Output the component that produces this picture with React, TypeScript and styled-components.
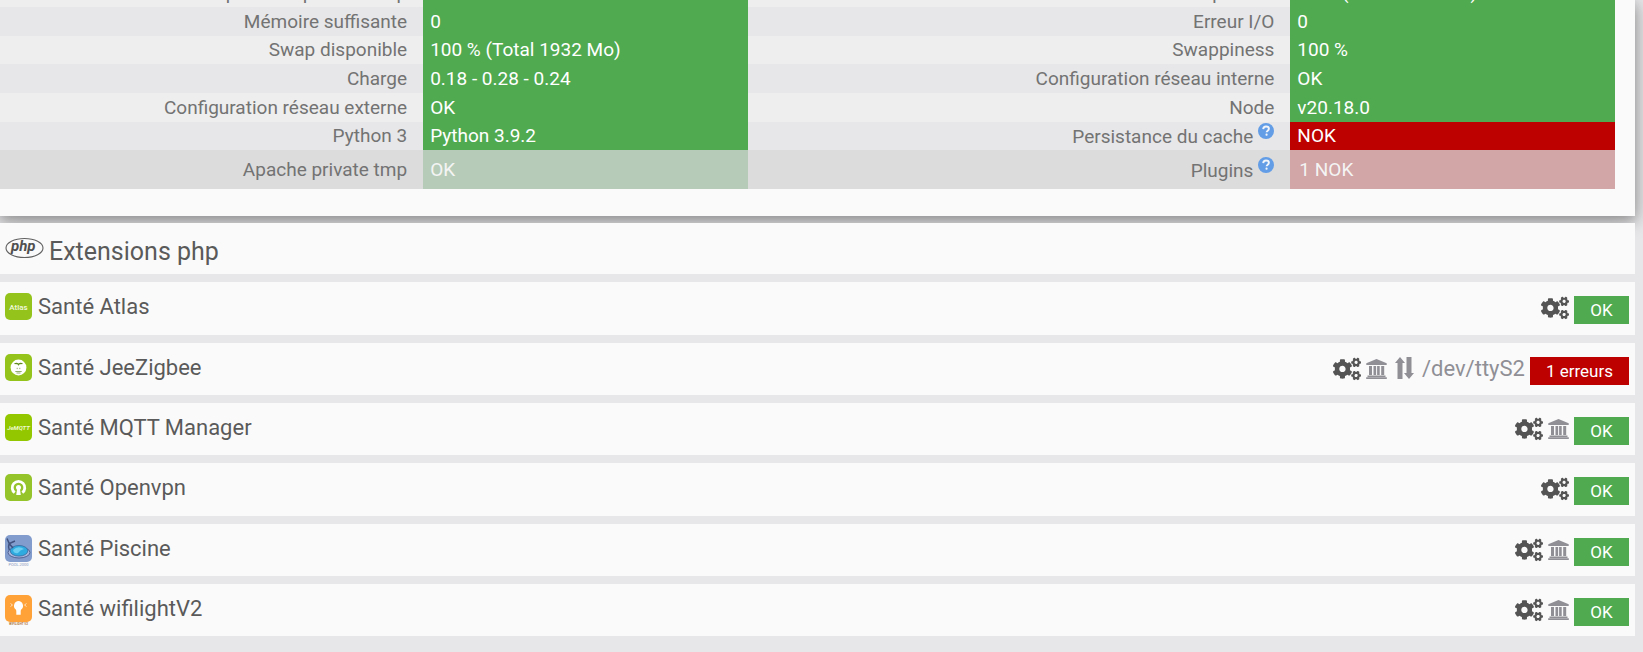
import React from "react";
import styled, { createGlobalStyle } from "styled-components";
import { FaCogs } from "react-icons/fa";

const GlobalStyle = createGlobalStyle`
  * { box-sizing: border-box; }
  body {
    margin: 0;
    background: #e7e7e9;
    color: #5a5a5a;
    font-family: Roboto, "Liberation Sans", sans-serif;
  }
`;

const Page = styled.main`
  padding-right: 8px;
`;

const HealthPanel = styled.section`
  padding: 0 20px 27px 0;
  background: #fafafb;
  box-shadow: 0 5px 11px rgba(0, 0, 0, 0.18), 0 4px 20px rgba(0, 0, 0, 0.3);
`;

const TableViewport = styled.div`
  display: flex;
  flex-direction: column;
  justify-content: flex-end;
  height: 189px;
  overflow: hidden;
`;

const HealthTable = styled.table`
  width: 100%;
  table-layout: fixed;
  border-collapse: collapse;
  font-size: 19px;
  line-height: 24px;
`;

const HealthRow = styled.tr<{ $height: number; $hovered?: boolean }>`
  height: ${(p) => p.$height}px;
  background: ${(p) => (p.$hovered ? "#dcdcdc" : "#e7e7e9")};
  &:nth-child(odd) {
    background: ${(p) => (p.$hovered ? "#dcdcdc" : "#eeeeee")};
  }
`;

const LabelCell = styled.th`
  padding: 0 16px 0 0;
  color: #737373;
  font-weight: 400;
  text-align: right;
  white-space: nowrap;
`;

type Status = "ok" | "nok";

const ValueCell = styled.td<{ $status: Status; $faded?: boolean }>`
  padding: 0 7px;
  color: ${(p) => (p.$faded ? "#f4f4f4" : "#ffffff")};
  background: ${(p) =>
    p.$status === "ok"
      ? p.$faded ? "#b7ccb8" : "#50aa50"
      : p.$faded ? "#d2a5a6" : "#bd0000"};
`;

const PluginCount = styled.span`
  padding-left: 2px;
`;

const HelpButton = styled.button`
  width: 16px;
  height: 16px;
  margin-left: 5px;
  padding: 0;
  border: 0;
  background: none;
  vertical-align: 4px;
  svg { display: block; }
`;

const PanelList = styled.div`
  display: grid;
  grid-auto-rows: 53px 52px 52px;
  row-gap: 8px;
  margin-top: 8px;
`;

const PanelBar = styled.section`
  display: flex;
  justify-content: space-between;
  padding: 11px 6px 0 5px;
  background: #fafafb;
`;

const PhpBar = styled(PanelBar)`
  height: 51px;
  margin-top: 7px;
`;

const PanelTitle = styled.h3<{ $size: number }>`
  margin: 0;
  font-size: ${(p) => p.$size}px;
  font-weight: 400;
  line-height: 28px;
`;

const TitleLink = styled.a`
  display: flex;
  align-items: flex-start;
  gap: 6px;
  color: inherit;
  text-decoration: none;
  svg { flex: none; overflow: visible; }
`;

const PhpTitle = styled(TitleLink)`
  padding-top: 4px;
`;

const Actions = styled.div`
  display: flex;
  align-items: flex-start;
  gap: 5px;
  color: #8f8f95;
`;

const IconButton = styled.button`
  display: flex;
  align-items: center;
  height: 30px;
  padding: 0;
  border: 0;
  background: none;
  color: #545454;
`;

const Marker = styled.span`
  display: flex;
  align-items: center;
  height: 30px;
`;

const PortMarker = styled(Marker)`
  height: 28px;
  padding: 0 3px;
`;

const Port = styled.span`
  font-size: 22px;
  line-height: 30px;
`;

const Badge = styled.span<{ $status: Status }>`
  min-width: 55px;
  margin-top: 3px;
  padding: 0 16px;
  color: #ffffff;
  background: ${(p) => (p.$status === "ok" ? "#50aa50" : "#bd0000")};
  font-size: 17px;
  line-height: 28px;
  text-align: center;
`;

const HelpIcon = () => (
  <svg width="16" height="16" viewBox="0 0 16 16" aria-hidden="true">
    <circle cx="8" cy="8" r="8" fill="#629de6" />
    <path d="M5.200 6.100C5.300 4.300 6.400 3.500 8 3.500c1.700 0 2.900.9 2.900 2.300 0 1.900-2.300 1.900-2.300 3.500" fill="none" stroke="#f2f5fa" strokeWidth="1.900" />
    <rect x="7.500" y="10.600" width="2.100" height="2.100" rx=".8" fill="#f2f5fa" />
  </svg>
);

const MarketIcon = () => (
  <svg width="21" height="20" viewBox="0 0 21 20" fill="currentColor" role="img" aria-label="Market">
    <path d="M10.500 0 20.700 4.200V6H.3V4.200ZM3 7h3v9H3zM7.500 7h2.600v9H7.500zM11.100 7h2.600v9h-2.600zM15.200 7h3v9h-3zM1.500 16.500h18V18h-18zM.2 18.200h20.600V20H.2z" />
  </svg>
);

const PortIcon = () => (
  <svg width="19" height="22" viewBox="0 0 19 22" fill="currentColor" role="img" aria-label="Port">
    <path d="M5 0 10 6H7.500V22H2.500V6H0ZM14 22 9 16H11.500V0h5v16H19Z" />
  </svg>
);

const PhpLogo = () => (
  <svg width="38" height="20" viewBox="0 0 38 20" aria-hidden="true">
    <ellipse cx="19.500" cy="10" rx="18.500" ry="9.500" fill="none" stroke="#606060" strokeWidth="1.100" />
    <text x="6" y="13" fill="#505050" fontFamily="Roboto" fontSize="15" fontStyle="italic" fontWeight="700">php</text>
  </svg>
);

const Tile = ({ color, children }: { color: string; children: React.ReactNode }) => (
  <svg width="27" height="27" viewBox="0 0 27 27" aria-hidden="true">
    <rect width="27" height="27" rx="5" fill={color} />
    {children}
  </svg>
);

const AtlasLogo = () => (
  <Tile color="#94c41c">
    <text x="13.500" y="17" textAnchor="middle" fill="#f0f7df" fontFamily="Roboto" fontSize="8" fontWeight="500">Atlas</text>
  </Tile>
);

const ZigbeeLogo = () => (
  <Tile color="#94c41c">
    <circle cx="13.500" cy="13.500" r="7.900" fill="#fff" />
    <path d="M8.800 10q2.500-2.400 4.700-.5 2.200-1.900 4.700.5l-3.600.3-1.100 1.500-1.100-1.500z" fill="#5d8b1c" />
    <path d="M12.200 13.800v1.300M14.800 13.800v1.300M10.300 17.500h6.400M11.500 19h4" stroke="#86a55b" strokeWidth=".9" />
  </Tile>
);

const MqttLogo = () => (
  <Tile color="#93c800">
    <text x="13.500" y="16" textAnchor="middle" fill="#edf8cf" fontFamily="Roboto" fontSize="6" fontStyle="italic" fontWeight="700">JeMQTT</text>
  </Tile>
);

const OpenvpnLogo = () => (
  <Tile color="#94c32a">
    <path d="M9.700 18.700a6.300 6.300 0 1 1 7.600 0" fill="none" stroke="#fff" strokeWidth="2.800" />
    <circle cx="13.500" cy="13.500" r="2.500" fill="#fff" />
    <path d="M12.300 14h2.500l1 7h-4.600z" fill="#fff" />
  </Tile>
);

const PoolLogo = () => (
  <Tile color="#829dcd">
    <ellipse cx="14" cy="17.500" rx="11" ry="5.500" fill="#a6b4db" stroke="#526293" />
    <ellipse cx="14" cy="15.800" rx="8.800" ry="5.300" fill="#2fabe0" stroke="#356aa0" strokeWidth=".8" />
    <path d="M8 15q5-5 11-1-4 1-6 4-4 1-5-3" fill="#6ccef0" />
    <path d="M2 3.500 4.500 9 8 13M4.500 8.500 10 6M4 9q-1 3 .3 6" fill="none" stroke="#40517f" strokeWidth="1.500" />
    <text x="13.500" y="31" textAnchor="middle" fill="#8797bd" fontFamily="Roboto" fontSize="4">POOL.2000</text>
  </Tile>
);

const WifilightLogo = () => (
  <Tile color="#ffa238">
    <path d="M13.500 6a4.800 4.800 0 0 0-3 8.300q.8.700.8 2v3.500h4.400v-3.500q0-1.300.8-2A4.800 4.800 0 0 0 13.500 6" fill="#fff" />
    <path d="M5.500 8.500 7.500 10l-2 1.500M21.500 8.500 19.500 10l2 1.500" stroke="#ffe1bd" fill="none" />
    <text x="13.500" y="30" textAnchor="middle" fill="#b2773c" fontFamily="Roboto" fontSize="3" fontWeight="700">WIFILIGHT V2</text>
  </Tile>
);

interface Cell {
  label: string;
  value: string;
  status?: Status;
  help?: boolean;
}

const healthRows: { height: number; cells: Cell[]; hovered?: boolean }[] = [
  { height: 29, cells: [{ label: "Espace disque libre tmp", value: "99 %" }, { label: "Mémoire disponible", value: "71 % (Total 1976 Mo)" }] },
  { height: 29, cells: [{ label: "Mémoire suffisante", value: "0" }, { label: "Erreur I/O", value: "0" }] },
  { height: 28, cells: [{ label: "Swap disponible", value: "100 % (Total 1932 Mo)" }, { label: "Swappiness", value: "100 %" }] },
  { height: 29, cells: [{ label: "Charge", value: "0.18 - 0.28 - 0.24" }, { label: "Configuration réseau interne", value: "OK" }] },
  { height: 29, cells: [{ label: "Configuration réseau externe", value: "OK" }, { label: "Node", value: "v20.18.0" }] },
  { height: 28, cells: [{ label: "Python 3", value: "Python 3.9.2" }, { label: "Persistance du cache", value: "NOK", status: "nok", help: true }] },
  { height: 39, hovered: true, cells: [{ label: "Apache private tmp", value: "OK" }, { label: "Plugins", value: "1 NOK", status: "nok", help: true }] },
];

const plugins: { name: string; logo: React.ReactNode; market?: boolean; port?: string; errors?: number }[] = [
  { name: "Atlas", logo: <AtlasLogo /> },
  { name: "JeeZigbee", logo: <ZigbeeLogo />, market: true, port: "/dev/ttyS2", errors: 1 },
  { name: "MQTT Manager", logo: <MqttLogo />, market: true },
  { name: "Openvpn", logo: <OpenvpnLogo /> },
  { name: "Piscine", logo: <PoolLogo />, market: true },
  { name: "wifilightV2", logo: <WifilightLogo />, market: true },
];

export default function App() {
  return (
    <Page>
      <GlobalStyle />
      <HealthPanel>
        <TableViewport>
          <HealthTable>
            <colgroup>
              <col style={{ width: "26.2%" }} />
              <col style={{ width: "20.1%" }} />
              <col style={{ width: "33.6%" }} />
              <col style={{ width: "20.1%" }} />
            </colgroup>
            <tbody>
              {healthRows.map((row) => (
                <HealthRow key={row.cells[0].label} $height={row.height} $hovered={row.hovered}>
                  {row.cells.map(({ label, value, status = "ok", help }) => (
                    <React.Fragment key={label}>
                      <LabelCell scope="row">
                        {label}
                        {help && <HelpButton aria-label={`Aide : ${label}`}><HelpIcon /></HelpButton>}
                      </LabelCell>
                      <ValueCell $status={status} $faded={row.hovered}>
                        {label === "Plugins" ? <PluginCount>{value}</PluginCount> : value}
                      </ValueCell>
                    </React.Fragment>
                  ))}
                </HealthRow>
              ))}
            </tbody>
          </HealthTable>
        </TableViewport>
      </HealthPanel>

      <PhpBar>
        <PanelTitle $size={25}>
          <PhpTitle href="#php"><PhpLogo />Extensions php</PhpTitle>
        </PanelTitle>
      </PhpBar>

      <PanelList>
        {plugins.map(({ name, logo, market, port, errors }) => (
          <PanelBar key={name} id={name}>
            <PanelTitle $size={22}>
              <TitleLink href={`#${name}`}>{logo}Santé {name}</TitleLink>
            </PanelTitle>
            <Actions>
              <IconButton aria-label={`Configurer ${name}`}><FaCogs size={28} /></IconButton>
              {market && <Marker><MarketIcon /></Marker>}
              {port && <><PortMarker><PortIcon /></PortMarker><Port>{port}</Port></>}
              <Badge $status={errors ? "nok" : "ok"}>{errors ? `${errors} erreurs` : "OK"}</Badge>
            </Actions>
          </PanelBar>
        ))}
      </PanelList>
    </Page>
  );
}
